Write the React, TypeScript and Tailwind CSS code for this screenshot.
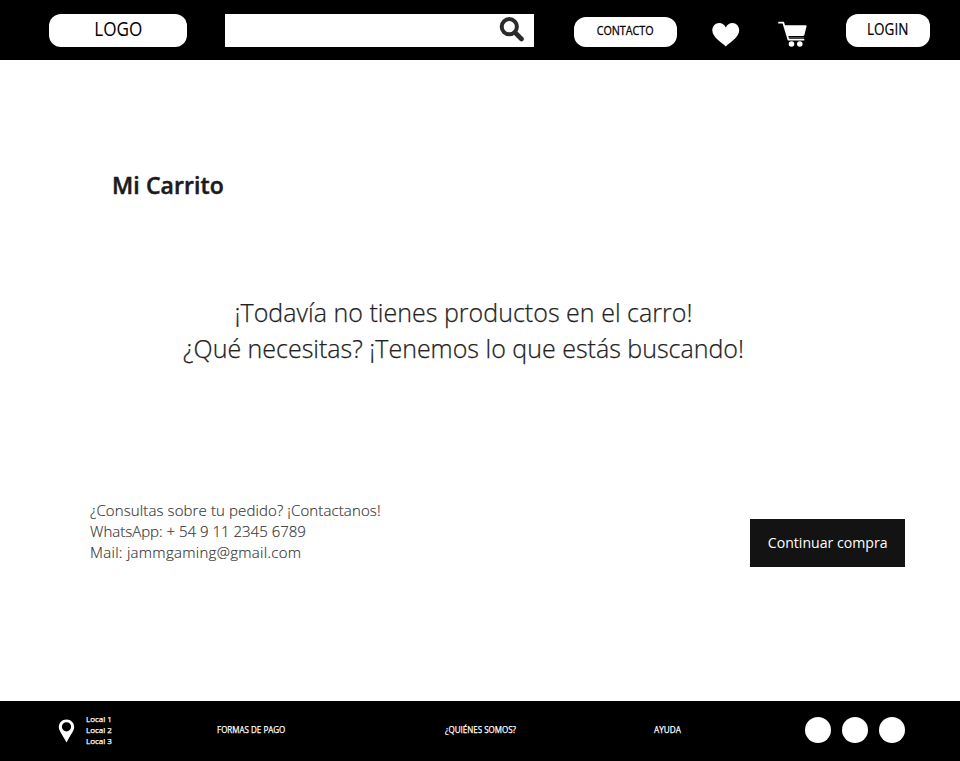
import React from "react";

const myriad = "font-['Open_Sans','Noto_Sans',sans-serif] whitespace-nowrap";

function Header() {
  return (
    <header className={`flex h-[60px] items-start bg-black text-black ${myriad}`}>
      <a className="ml-[49px] mt-[14px] flex h-[33px] w-[138px] items-center justify-center rounded-[12px] bg-white text-[19.5px] leading-[30px]">
        <span className="mb-[3px] scale-x-[0.88]">LOGO</span>
      </a>
      <div className="ml-[38px] mt-[14px] flex h-[33px] w-[309px] justify-end bg-white pr-[9px] pt-[2px]">
        <svg className="h-[26px] w-[26px]" viewBox="0 0 26 26" fill="none" stroke="#2b2b2b">
          <circle cx="10.3" cy="10.7" r="7.6" strokeWidth="4" />
          <path d="M16 16.5L22.5 23" strokeWidth="4.6" strokeLinecap="round" />
        </svg>
      </div>
      <a className="ml-[40px] mt-[17px] flex h-[30px] w-[103px] items-center justify-center rounded-[12px] bg-white text-[12.5px]">
        <span className="mb-[2px] scale-x-[0.86] [-webkit-text-stroke:0.3px_black]">CONTACTO</span>
      </a>
      <svg className="ml-[35px] mt-[22px] h-[25px] w-[28px]" viewBox="0 0 28 25" fill="white">
        <path d="M13.8 24.6C10.5 20.7 0.3 15.7 0.3 8.3C0.3 4.1 3.4 1 7.2 1C10.1 1 12.5 2.7 13.8 5.5C15.1 2.7 17.5 1 20.4 1C24.2 1 27.2 4.1 27.2 8.3C27.2 15.7 17 20.7 13.8 24.6Z" />
      </svg>
      <svg className="ml-[38px] mt-[21px] h-[27px] w-[30px]" viewBox="0 0 30 27" fill="white">
        <path d="M1 1.7H5.3L10.5 18.7H25.5" fill="none" stroke="white" strokeWidth="1.8" strokeLinecap="round" strokeLinejoin="round" />
        <path d="M6.6 4.2H27.5Q28.8 4.2 28.5 5.5L26.4 14Q26 15 24.8 15H9.8Z" />
        <path d="M10.5 16.6H25.8" stroke="#8a8a8a" strokeWidth="0.6" />
        <circle cx="13.5" cy="23" r="2.8" />
        <circle cx="21.8" cy="23" r="2.8" />
      </svg>
      <a className="ml-[38px] mt-[14px] flex h-[33px] w-[84px] items-center justify-center rounded-[12px] bg-white text-[15.5px]">
        <span className="mb-[2px] scale-x-[0.87] [-webkit-text-stroke:0.2px_black]">LOGIN</span>
      </a>
    </header>
  );
}

function Main() {
  return (
    <main className="flex h-[641px] flex-col font-['Open_Sans','Noto_Sans',sans-serif]">
      <h1 className="ml-[112px] mt-[109px] h-[32px] whitespace-nowrap text-[23px] font-semibold leading-[32px] tracking-[0.1px] text-[#1b1b1b] [-webkit-text-stroke:0.5px_#1b1b1b]">
        Mi Carrito
      </h1>
      <div className="ml-[183px] mt-[93px] flex w-[561px] flex-col items-center whitespace-nowrap text-[25px] font-light leading-[36px] text-[#222] [-webkit-text-stroke:0.25px_#222]">
        <p className="tracking-[0.02px]">¡Todavía no tienes productos en el carro!</p>
        <p>¿Qué necesitas? ¡Tenemos lo que estás buscando!</p>
      </div>
      <div className="mt-[133px] flex h-[72px] justify-between pl-[90px] pr-[55px]">
        <div className="mt-px whitespace-nowrap text-[15px] font-light leading-[21px] text-[#333] [-webkit-text-stroke:0.15px_#333]">
          <p className="tracking-[0.11px]">¿Consultas sobre tu pedido? ¡Contactanos!</p>
          <p>WhatsApp: + 54 9 11 2345 6789</p>
          <p className="tracking-[0.29px]">Mail: jammgaming@gmail.com</p>
        </div>
        <button className="mt-[20px] flex h-[48px] w-[155px] items-center justify-center whitespace-nowrap bg-[#131313] text-[15px] text-white">
          <span className="mb-px scale-x-[0.94]">Continuar compra</span>
        </button>
      </div>
    </main>
  );
}

function Footer() {
  return (
    <footer className={`flex h-[60px] items-start bg-black text-[9px] leading-[11px] text-white [-webkit-text-stroke:0.25px_white] ${myriad}`}>
      <svg className="ml-[58px] mt-[18px] h-[24px] w-[17px]" viewBox="0 0 17 24" fill="white">
        <path fillRule="evenodd" d="M8.5 0.5C4 0.5 0.8 3.9 0.8 8.1C0.8 12 4 15 8.5 23.5C13 15 16.2 12 16.2 8.1C16.2 3.9 13 0.5 8.5 0.5ZM8.5 3.2A4.6 4.6 0 1 1 8.5 12.4A4.6 4.6 0 1 1 8.5 3.2Z" />
      </svg>
      <ul className="ml-[11px] mt-[12px] w-[131px] text-[8px]">
        <li>Local 1</li>
        <li>Local 2</li>
        <li>Local 3</li>
      </ul>
      <a className="mt-[23px] w-[228px] origin-left scale-x-[0.89]">FORMAS DE PAGO</a>
      <a className="mt-[23px] w-[209px] origin-left scale-x-[0.89]">¿QUIÉNES SOMOS?</a>
      <a className="mt-[23px] w-[151px] origin-left scale-x-[0.91]">AYUDA</a>
      <div className="mt-[16px] flex gap-[11px]">
        <span className="size-[26px] rounded-full bg-white" />
        <span className="size-[26px] rounded-full bg-white" />
        <span className="size-[26px] rounded-full bg-white" />
      </div>
    </footer>
  );
}

export default function App() {
  return (
    <div className="h-[761px] w-[960px] overflow-hidden bg-white">
      <Header />
      <Main />
      <Footer />
    </div>
  );
}
